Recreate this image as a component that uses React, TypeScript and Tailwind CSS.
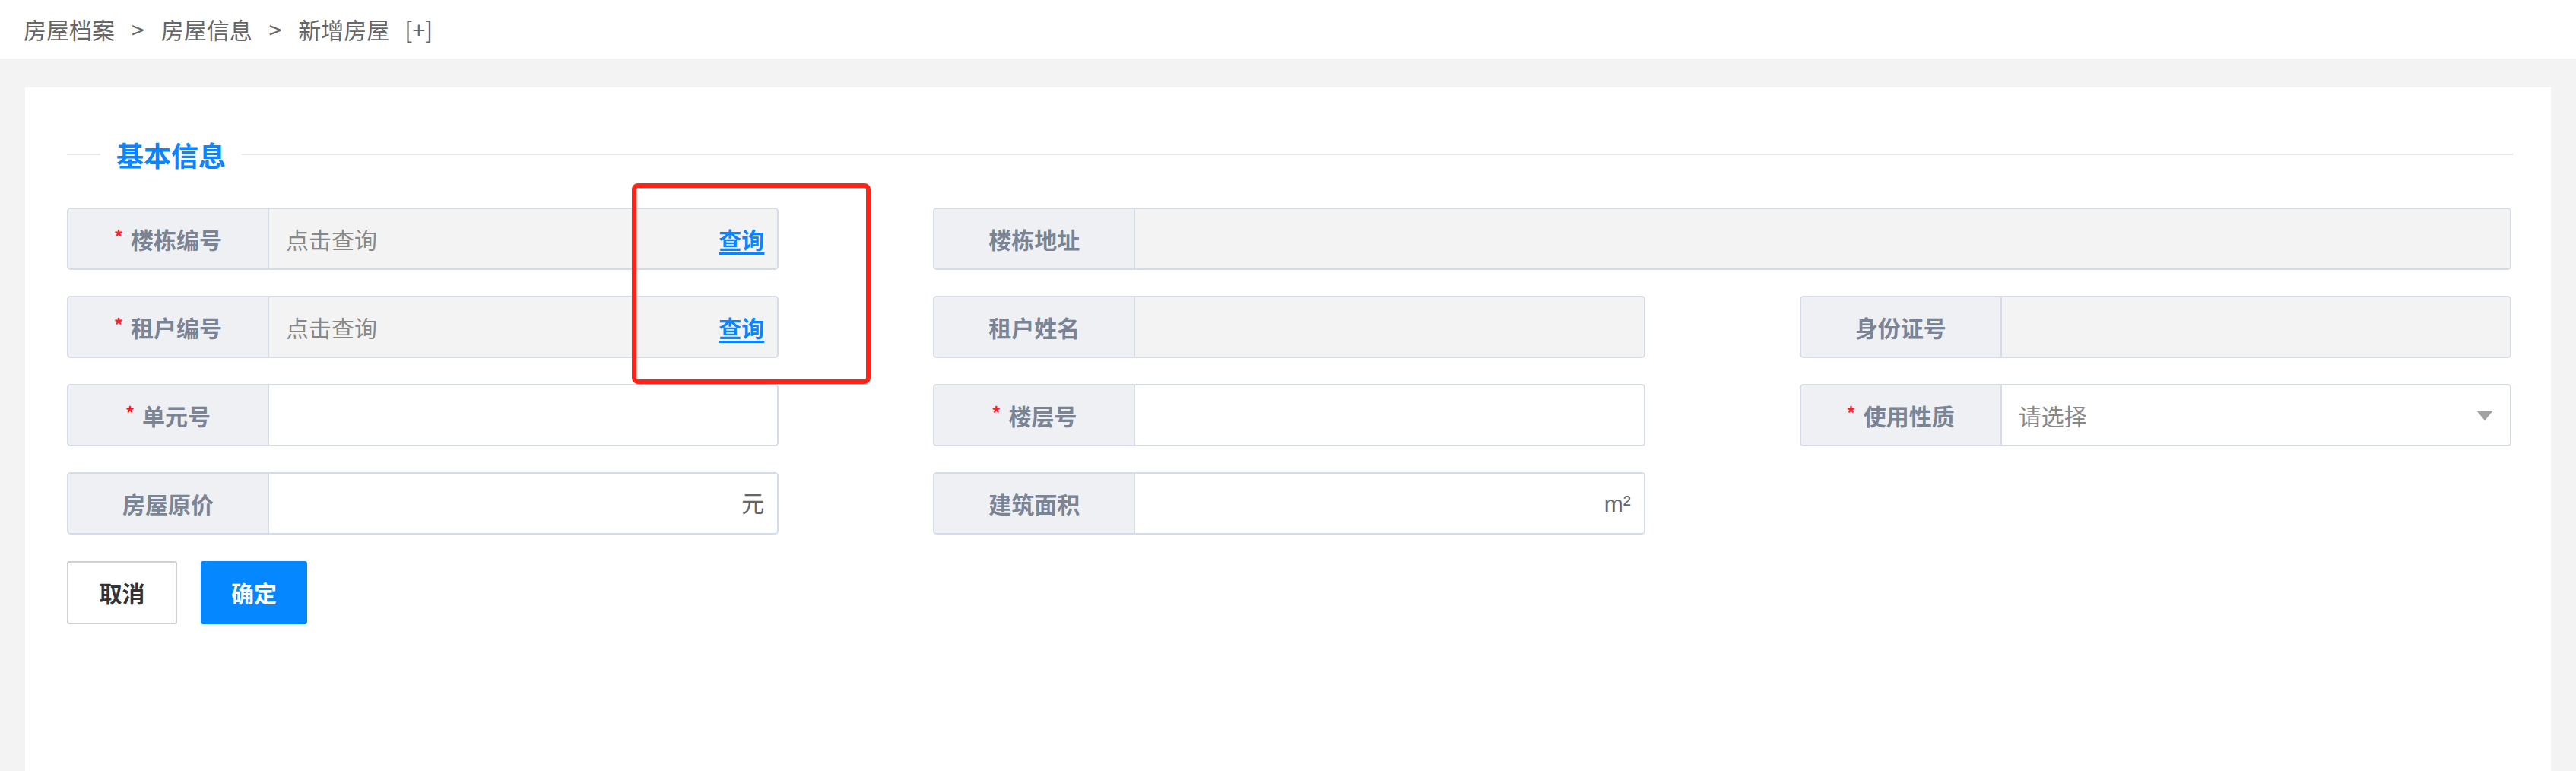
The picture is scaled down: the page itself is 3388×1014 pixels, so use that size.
import React from 'react';

type Field = {
  label: string;
  required?: boolean;
  readOnly?: boolean;
  placeholder?: string;
  link?: string;
  suffix?: string;
  select?: boolean;
  span?: boolean;
};

const rows: (Field | null)[][] = [
  [
    { label: '楼栋编号', required: true, readOnly: true, placeholder: '点击查询', link: '查询' },
    { label: '楼栋地址', readOnly: true, span: true },
  ],
  [
    { label: '租户编号', required: true, readOnly: true, placeholder: '点击查询', link: '查询' },
    { label: '租户姓名', readOnly: true },
    { label: '身份证号', readOnly: true },
  ],
  [
    { label: '单元号', required: true },
    { label: '楼层号', required: true },
    { label: '使用性质', required: true, select: true, placeholder: '请选择' },
  ],
  [
    { label: '房屋原价', suffix: '元' },
    { label: '建筑面积', suffix: 'm²' },
    null,
  ],
];

function FormItem({ field }: { field: Field }) {
  return (
    <div
      className={`flex h-[82px] rounded-[5px] border-2 border-[#d5dce7] overflow-hidden ${
        field.span ? 'col-span-2' : ''
      }`}
    >
      <div className="w-[264px] shrink-0 flex items-center justify-center bg-[#eff0f4] border-r-2 border-[#d5dce7] text-[30px] font-semibold text-[#7b8494]">
        {field.required && (
          <span className="text-[#f5222d] text-[24px] mr-[10px] -mt-[6px]">*</span>
        )}
        {field.label}
      </div>
      <div
        className={`flex-1 flex items-center justify-between pl-[22px] pr-[17px] text-[30px] ${
          field.readOnly ? 'bg-[#f3f3f3]' : 'bg-white'
        }`}
      >
        <span className="text-[#888888]">{field.placeholder}</span>
        {field.link && (
          <a className="text-[#0a84ff] font-semibold underline underline-offset-[5px] cursor-pointer">
            {field.link}
          </a>
        )}
        {field.suffix && (
          <span className="text-[#666666]" style={{ fontFamily: '"Liberation Sans", "Noto Sans CJK SC", sans-serif' }}>
            {field.suffix}
          </span>
        )}
        {field.select && (
          <span className="w-0 h-0 mr-[5px] border-l-[11px] border-r-[11px] border-t-[13px] border-l-transparent border-r-transparent border-t-[#a3a3a3]" />
        )}
      </div>
    </div>
  );
}

export default function App() {
  return (
    <div
      className="relative min-h-[1014px] flex flex-col bg-white"
      style={{ fontFamily: '"Noto Sans CJK SC", "Noto Sans", sans-serif' }}
    >
      <div className="h-[77px] flex items-center pl-[31px] text-[30px] text-[#666666]">
        <span>房屋档案</span>
        <span className="mx-[22px]">&gt;</span>
        <span>房屋信息</span>
        <span className="mx-[22px]">&gt;</span>
        <span>新增房屋</span>
        <span className="ml-[20px]">[+]</span>
      </div>

      <div className="flex-1 flex bg-[#f3f3f3] px-[33px] pt-[38px]">
        <div className="flex-1 bg-white pl-[55px] pr-[50px] pt-[63px]">
          <div className="flex items-center h-[50px]">
            <div className="w-[44px] h-[2px] bg-[#e6e6e6]" />
            <h2 className="mx-[21px] text-[36px] leading-[50px] font-bold text-[#0a84ff]">基本信息</h2>
            <div className="flex-1 h-[2px] bg-[#e6e6e6]" />
          </div>

          <div className="mt-[45px] mr-[2px] grid grid-cols-3 gap-x-[203px] gap-y-[34px]">
            {rows.flat().map((f, i) =>
              f ? <FormItem key={i} field={f} /> : <div key={i} />
            )}
          </div>

          <div className="mt-[35px] flex gap-[31px]">
            <button className="w-[145px] h-[83px] rounded-[3px] border-2 border-[#d0d0d0] bg-white text-[30px] font-bold text-[#333333]">
              取消
            </button>
            <button className="w-[140px] h-[83px] rounded-[3px] bg-[#0587ff] text-[30px] font-bold text-white">
              确定
            </button>
          </div>
        </div>
      </div>

      {/* annotation box */}
      <div className="absolute left-[831px] top-[241px] w-[314px] h-[264px] border-[6px] border-[#ff2318] rounded-[8px]" />
    </div>
  );
}
